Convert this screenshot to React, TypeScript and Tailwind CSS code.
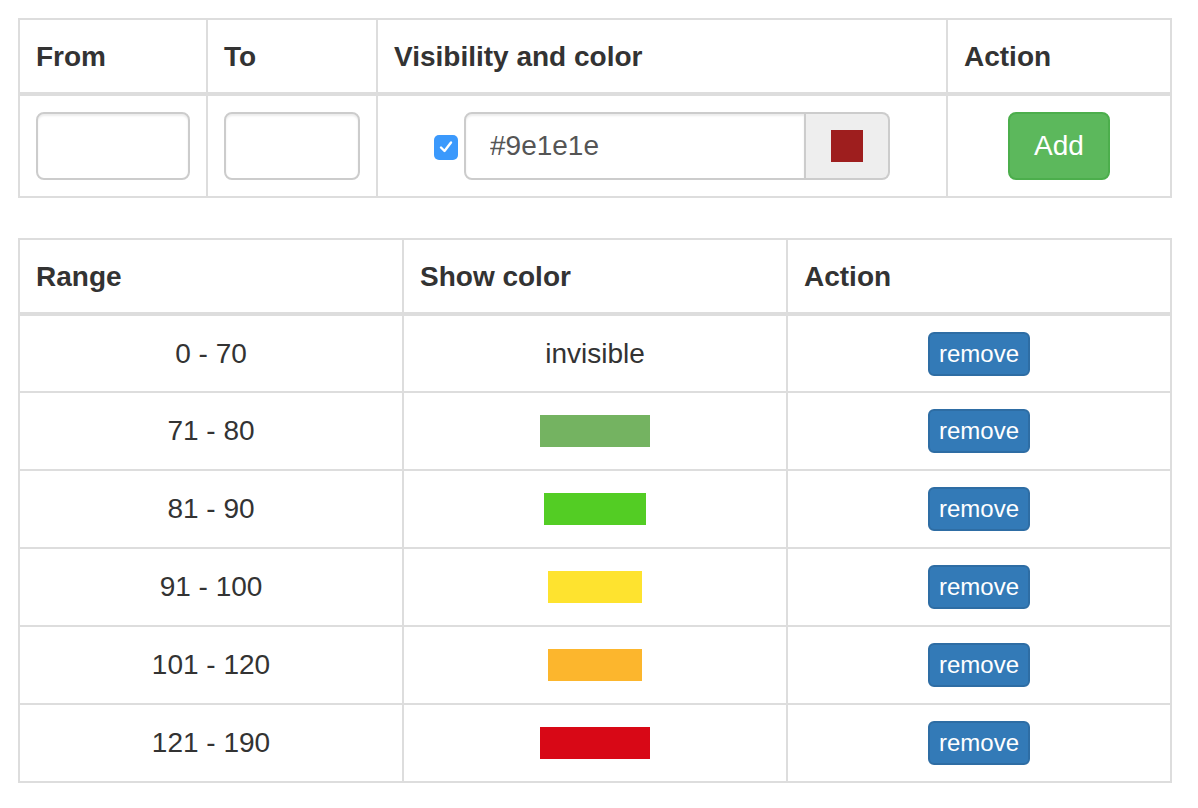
import React from "react";

const rows = [
  { range: "0 - 70", color: null as string | null, w: 0 },
  { range: "71 - 80", color: "#74b361", w: 110 },
  { range: "81 - 90", color: "#53cd24", w: 102 },
  { range: "91 - 100", color: "#fee32f", w: 94 },
  { range: "101 - 120", color: "#fcb62d", w: 94 },
  { range: "121 - 190", color: "#d80816", w: 110 },
];

export default function App() {
  return (
    <div className="min-h-screen bg-white p-[18px] font-['Liberation_Sans','Helvetica_Neue',Arial,sans-serif] text-[28px] leading-[40px] text-[#333]">
      <table className="w-[1152px] table-fixed border-collapse border-2 border-[#ddd]">
        <colgroup>
          <col className="w-[188px]" />
          <col className="w-[170px]" />
          <col className="w-[570px]" />
          <col className="w-[224px]" />
        </colgroup>
        <thead>
          <tr>
            <th className="border-2 border-b-4 border-[#ddd] px-[16px] pb-[15px] pt-[17px] text-left font-bold">From</th>
            <th className="border-2 border-b-4 border-[#ddd] px-[16px] pb-[15px] pt-[17px] text-left font-bold">To</th>
            <th className="border-2 border-b-4 border-[#ddd] px-[16px] pb-[15px] pt-[17px] text-left font-bold">Visibility and color</th>
            <th className="border-2 border-b-4 border-[#ddd] px-[16px] pb-[15px] pt-[17px] text-left font-bold">Action</th>
          </tr>
        </thead>
        <tbody>
          <tr>
            <td className="border-2 border-[#ddd] p-[16px] align-middle">
              <input className="block h-[68px] w-full rounded-[8px] border-2 border-[#ccc] bg-white px-[24px] text-[28px] text-[#555] shadow-[inset_0_2px_2px_rgba(0,0,0,0.075)] outline-none" />
            </td>
            <td className="border-2 border-[#ddd] p-[16px] align-middle">
              <input className="block h-[68px] w-full rounded-[8px] border-2 border-[#ccc] bg-white px-[24px] text-[28px] text-[#555] shadow-[inset_0_2px_2px_rgba(0,0,0,0.075)] outline-none" />
            </td>
            <td className="border-2 border-[#ddd] p-[16px] align-middle">
              <div className="flex items-center justify-center gap-[6px]">
                <span className="mt-[2px] flex h-[25px] w-[24px] items-center justify-center rounded-[5px] bg-[#3b99fc]">
                  <svg width="16" height="16" viewBox="0 0 16 16" fill="none">
                    <path d="M3 8.5 L6.5 12 L13 3.5" stroke="white" strokeWidth="2.4" strokeLinecap="round" strokeLinejoin="round" />
                  </svg>
                </span>
                <div className="flex h-[68px] w-[426px]">
                  <input
                    defaultValue="#9e1e1e"
                    className="h-full w-[342px] rounded-l-[8px] border-2 border-[#ccc] bg-white px-[24px] text-[28px] text-[#555] shadow-[inset_0_2px_2px_rgba(0,0,0,0.075)] outline-none"
                  />
                  <span className="flex h-full w-[84px] items-center justify-center rounded-r-[8px] border-y-2 border-r-2 border-[#ccc] bg-[#eee]">
                    <span className="block h-[32px] w-[32px] bg-[#9e1e1e]" />
                  </span>
                </div>
              </div>
            </td>
            <td className="border-2 border-[#ddd] p-[16px] text-center align-middle">
              <button className="h-[68px] w-[102px] rounded-[8px] border-2 border-[#4cae4c] bg-[#5cb85c] text-[28px] text-white">
                Add
              </button>
            </td>
          </tr>
        </tbody>
      </table>

      <table className="mt-[40px] w-[1152px] table-fixed border-collapse border-2 border-[#ddd]">
        <colgroup>
          <col className="w-[384px]" />
          <col className="w-[384px]" />
          <col className="w-[384px]" />
        </colgroup>
        <thead>
          <tr>
            <th className="border-2 border-b-4 border-[#ddd] px-[16px] pb-[15px] pt-[17px] text-left font-bold">Range</th>
            <th className="border-2 border-b-4 border-[#ddd] px-[16px] pb-[15px] pt-[17px] text-left font-bold">Show color</th>
            <th className="border-2 border-b-4 border-[#ddd] px-[16px] pb-[15px] pt-[17px] text-left font-bold">Action</th>
          </tr>
        </thead>
        <tbody>
          {rows.map((r) => (
            <tr key={r.range}>
              <td className="h-[78px] border-2 border-[#ddd] px-[16px] py-0 text-center align-middle">{r.range}</td>
              <td className="h-[78px] border-2 border-[#ddd] px-[16px] py-0 text-center align-middle">
                {r.color ? (
                  <span className="mx-auto block h-[32px]" style={{ width: r.w, backgroundColor: r.color }} />
                ) : (
                  "invisible"
                )}
              </td>
              <td className="h-[78px] border-2 border-[#ddd] px-[16px] py-0 text-center align-middle">
                <button className="h-[44px] w-[102px] rounded-[6px] border-2 border-[#2e6da4] bg-[#337ab7] text-[24px] leading-[36px] text-white">
                  remove
                </button>
              </td>
            </tr>
          ))}
        </tbody>
      </table>
    </div>
  );
}
